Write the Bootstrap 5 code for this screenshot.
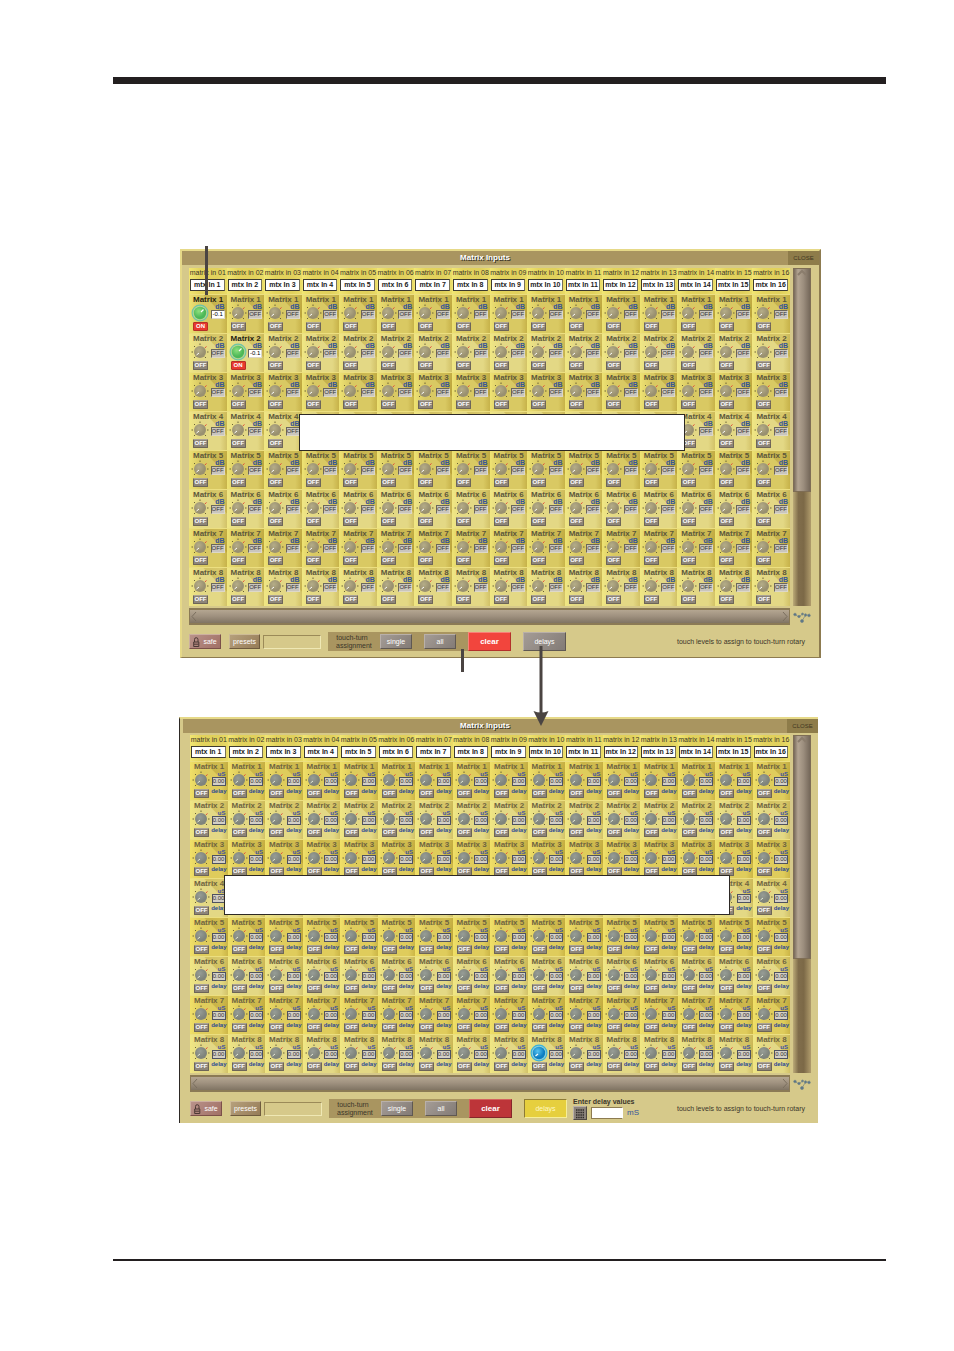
<!DOCTYPE html>
<html lang="en">
<head>
<meta charset="utf-8">
<meta name="viewport" content="width=device-width, initial-scale=1">
<title>Matrix Inputs</title>
<link href="https://cdn.jsdelivr.net/npm/bootstrap@5.3.0/dist/css/bootstrap.min.css" rel="stylesheet">
<style>
body{font-family:"Liberation Sans",Arial,sans-serif;font-size:7px;line-height:8px;color:#3b352a;background:#fff}
.sheet{padding:77px 68px 0 113px}
.rule-top{height:7px;background:#231f20}
.rule-bottom{height:2px;background:#231f20;margin-top:136px}
button{font-family:inherit;padding:0;line-height:8px}
.panel{background:#d6c98a}
.panel-levels{margin:165px 65px 0 67px;border:solid;border-width:2px 2px 1px 2px;border-color:#e6d988 #8d7b50 #8d7b50 #e6d988}
.panel-delays{margin:59px 68px 0 66px;border-left:1px solid #2d2925;border-top:2px solid #e6d988;padding-left:3px}
.titlebar{height:14px;background:#a99560}
.titlebar h2{font-size:8px;line-height:14px;font-weight:700;color:#fff;text-shadow:1px 1px 0 #3b352a}
.close-btn{width:31px;height:14px;border:0;background:#8e7c4a;color:#40371f;font-size:6px}
.work{display:grid;grid-template-columns:1fr 18px;column-gap:3px;row-gap:2px}
.panel-levels .work{padding:3px 8px 0 7px}
.panel-delays .work{padding:2px 7px 0 7px}
.strips{display:grid;grid-template-columns:repeat(16,minmax(0,1fr))}
.head-cell{height:26px;text-align:center;background:linear-gradient(90deg,#f1e673,#e3d35c 30%,#e0d05c 75%,#eadc68);white-space:nowrap}
.head-cell span{display:block;height:11px;line-height:10px;margin:0 -2px}
.name-btn{display:block;width:calc(100% - 3px);height:12px;margin:0 1px;border:1px solid #3d3a30;border-right-color:#77725c;background:#fff;font-size:7px;font-weight:700;color:#222;line-height:10px;overflow:hidden}
.cell-box{display:grid;grid-template-columns:19px minmax(0,1fr);grid-template-rows:10px 17px 11px;height:39px;padding:0 2px;border-top:1px solid #ecdf80;
background:linear-gradient(90deg,rgba(245,235,120,.75),rgba(245,235,120,0) 30%,rgba(150,120,20,0) 82%,rgba(160,130,20,.32)),linear-gradient(45deg,#d9c963 68%,#c5b14c 70%,#d2c05a)}
.cell-box.even{background:linear-gradient(90deg,rgba(245,236,130,.75),rgba(245,236,130,0) 30%,rgba(150,120,20,0) 82%,rgba(160,130,20,.26)),linear-gradient(45deg,#e3d885 68%,#d2c161 70%,#dccd72)}
.cell-title{grid-column:1/3;font-size:8px;line-height:10px;font-weight:700;color:#5c573a;white-space:nowrap;padding-left:2px}
.cell-box.live .cell-title{color:#1f1c10}
.knob-btn{border:0;background:none;width:18px;height:18px;margin-top:-1px}
.knob-btn svg{display:block;width:18px;height:18px}
.readout{display:flex;flex-direction:column;align-items:flex-end;margin-top:-1px}
.unit-text{color:#34549a;font-weight:700;font-size:7px;line-height:6px}
.value-box{width:14px;height:9px;border:1px solid #6b675c;border-right-color:#ddd8c8;border-bottom-color:#ddd8c8;background:#c9c5bd;font-size:6px;line-height:7px;display:flex;justify-content:center;color:#333;white-space:nowrap}
.live .value-box{background:#fff;color:#000}
.off-btn{width:15px;height:9px;margin-left:2px;border:1px solid #6d6558;border-top-color:#aaa295;border-radius:1px;background:#8d8579;color:#fff;font-size:6px;line-height:7px;font-weight:700}
.live .off-btn{background:#e8392e;border-color:#b53027}
.delay-text{font-weight:700;font-size:6px;color:#2c4a95;line-height:6px;margin:-1px -1px 0 0;display:flex;justify-content:flex-end}
.panel-delays .cell-box:not(.even){background:linear-gradient(90deg,rgba(250,235,110,.65),rgba(250,235,110,0) 30%,rgba(150,120,20,0) 82%,rgba(160,130,20,.3)),linear-gradient(45deg,#dfcc5c 68%,#c9b448 70%,#d6c256)}
.panel-delays .cell-title{color:#6f6440}
.panel-delays .unit-text{font-size:6px;color:#3b4fa5}
.panel-delays .value-box{border-color:#4e5260;background:#d3cfc6}
.vtrack{height:338px;background:linear-gradient(90deg,#bcab78,#806d4b 30%,#7c6947 60%,#b09c6c)}
.vthumb{height:224px;border:1px solid #7e6d55;background:linear-gradient(90deg,#786a5b,#b3a492 25%,#9b8d7d 60%,#75685a)}
.vthumb svg,.htrack svg{display:block}
.htrack{height:17px;border:solid #8b7a55;border-width:2px 1px;background:linear-gradient(#b4a691,#a09280 45%,#807463)}
.panel-levels .tools{margin-top:7px;padding:0 14px 6px 7px}
.panel-delays .tools{margin-top:5px;padding:0 13px 3px 7px}
.key{height:15px;width:32px;border:1px solid;border-color:#b9b0a9 #5f5852 #5f5852 #b9b0a9;background:linear-gradient(135deg,#a49c96,#837b76);color:#fff;font-size:7px;display:flex;align-items:center;justify-content:center}
.key-safe{background:linear-gradient(135deg,#b9928a,#a17066);border-color:#cdb0a0 #7b5049 #7b5049 #cdb0a0;gap:3px}
.key-presets{width:31px;background:linear-gradient(135deg,#b6a07c,#967c58);border-color:#cdbb96 #6f5b3e #6f5b3e #cdbb96}
.key-big{width:43px;height:19px}
.key-clear{background:#f2453d;border-color:#f98178 #b3312b #b3312b #f98178;font-weight:700;font-size:8px}
.key-delays{margin-left:12px}
.panel-delays .key-clear{background:#bd3539;border-color:#d3625e #85262a #85262a #d3625e}
.panel-delays .key-delays{background:#e6cf3e;border-color:#8d7b35 #f6ee9a #f6ee9a #8d7b35;color:#fff8c4}
.preset-field{width:58px;height:14px;margin-left:3px;border:1px solid;border-color:#9b8a58 #efe8b4 #efe8b4 #9b8a58;background:#d6c98a;border-radius:0;padding:0 2px;font-size:7px}
.assign{background:#a99560;height:19px;gap:12px;margin-left:7px}
.assign-text{width:40px;text-align:center;white-space:nowrap;padding-left:8px}
.hint{color:#3b352a;white-space:nowrap}
.delay-entry{margin-left:6px;white-space:nowrap}
.delay-entry label{font-weight:700;line-height:9px;display:block}
.calc-btn{width:14px;height:14px;border:1px solid;border-color:#b9b0a9 #4f4842 #4f4842 #b9b0a9;background:#8a827b}
.calc-btn svg{display:block}
.ms-field{width:32px;height:12px;border:1px solid #8d7b50;border-right-color:#fff;background:#fff;padding:0 2px;font-size:7px}
.ms-unit{font-size:8px;color:#34549a}
.cover{position:absolute;background:#fff;border:1px solid #2d2925}
.cover-levels{left:117px;right:134px;top:163px;height:37px}
.cover-delays{left:44px;right:88px;top:156px;height:40px}
.pointer{position:absolute;width:3px;background:#4a4442}
.pointer-cell{left:23px;top:-5px;height:49px}
.pointer-assign{left:279px;top:398px;height:23px}
.arrow{position:absolute;left:351px;top:395px;z-index:2}
</style>
</head>
<body>
<svg width="0" height="0" class="position-absolute" aria-hidden="true">
<defs>
<radialGradient id="gGrey" cx=".4" cy=".35"><stop offset="0" stop-color="#b5ad88"/><stop offset="1" stop-color="#999070"/></radialGradient>
<radialGradient id="gSlate" cx=".4" cy=".35"><stop offset="0" stop-color="#979d96"/><stop offset="1" stop-color="#7f847c"/></radialGradient>
<radialGradient id="gGreen" cx=".4" cy=".35"><stop offset="0" stop-color="#8ee07c"/><stop offset="1" stop-color="#4cb858"/></radialGradient>
<radialGradient id="gBlue" cx=".4" cy=".35"><stop offset="0" stop-color="#58c4f0"/><stop offset="1" stop-color="#0d7ec2"/></radialGradient>
<g id="ticks" stroke="#6b6238" stroke-width="1"><path d="M9 .5V2M.5 9H2M16 9H17.500M3 3L4 4M3 15L4.200 13.800M15 15L13.800 13.800"/><path d="M15.500 3.500L13.800 5" stroke="#e04a3a"/></g>
<g id="kGrey"><use href="#ticks"/><circle cx="9" cy="9" r="6" fill="url(#gGrey)"/><path d="M5.500 12L8 10" stroke="#fff" stroke-width="1"/></g>
<g id="kSlate"><use href="#ticks"/><circle cx="9" cy="9" r="6" fill="url(#gSlate)"/><path d="M5.500 12L8 10" stroke="#e6ead8" stroke-width="1"/></g>
<g id="kGreen"><circle cx="9" cy="9" r="7.900" fill="#b7d592" stroke="#6cc4a8" stroke-width="1.200"/><circle cx="9" cy="9" r="6.200" fill="url(#gGreen)"/><path d="M10 8L12.500 5.500" stroke="#fff" stroke-width="1.200"/></g>
<g id="kBlue"><circle cx="9" cy="9" r="7.900" fill="#8fd0d8" stroke="#39b2dc" stroke-width="1.200"/><circle cx="9" cy="9" r="6.200" fill="url(#gBlue)"/><path d="M5.500 12L8 10" stroke="#fff" stroke-width="1.200"/></g>
<g id="lock" fill="none" stroke="#4b3834"><path d="M1.500 5V2.500Q1.500 .7 3.200 .7T5 2.500V5"/><path d="M.7 5H5.800V9.500H.7ZM1 7.200H5.500"/></g>
<g id="nodes" stroke="#7d8c84" stroke-width=".8" fill="#56728a"><path d="M1 2L6 5M6 5L9.500 2M9 9L12 4L17 2" fill="none"/><circle cx="2" cy="2.500" r="1.300"/><circle cx="6" cy="4.500" r="1.200"/><circle cx="9" cy="9" r="1.500"/><circle cx="9.500" cy="2" r="1"/><circle cx="12.500" cy="3" r="1.200"/><circle cx="16" cy="3.500" r="1.300"/></g>
</defs>
</svg>
<main class="sheet">
<div class="rule-top"></div>

<section class="panel panel-levels position-relative" data-kind="levels">
<header class="titlebar d-flex"><h2 class="m-0 flex-grow-1 text-center">Matrix Inputs</h2><button class="close-btn" type="button">CLOSE</button></header>
<div class="work">
<div class="strips"></div>
<div class="vtrack"><div class="vthumb"><svg width="16" height="8"><path d="M4 6L8 2L12 6" fill="none" stroke="#8b7d6d" stroke-width="2"/></svg></div></div>
<div class="htrack d-flex justify-content-between"><svg width="8" height="13"><path d="M6 2L2 6.500L6 11" fill="none" stroke="#7b6f5f"/></svg><svg width="8" height="13"><path d="M2 2L6 6.500L2 11" fill="none" stroke="#7b6f5f"/></svg></div>
<svg class="mt-1" width="18" height="12"><use href="#nodes"/></svg>
</div>
<footer class="tools d-flex align-items-center">
<button class="key key-safe" type="button"><svg width="7" height="10"><use href="#lock"/></svg>safe</button>
<button class="key key-presets ms-2" type="button">presets</button>
<input class="preset-field" type="text" aria-label="Preset name">
<div class="assign d-flex align-items-center"><div class="assign-text">touch-turn<br>assignment</div><button class="key" type="button">single</button><button class="key" type="button">all</button><button class="key key-big key-clear" type="button">clear</button></div>
<button class="key key-big key-delays" type="button">delays</button>
<span class="hint ms-auto">touch levels to assign to touch-turn rotary</span>
</footer>
<div class="cover cover-levels"></div>
<div class="pointer pointer-cell"></div>
<div class="pointer pointer-assign"></div>
<svg class="arrow" width="16" height="82"><path d="M8 0V68" stroke="#4a4442" stroke-width="3"/><path d="M.5 65Q8 68 15.500 65L8 80Z" fill="#4a4442"/></svg>
</section>

<section class="panel panel-delays position-relative" data-kind="delays">
<header class="titlebar d-flex"><h2 class="m-0 flex-grow-1 text-center">Matrix Inputs</h2><button class="close-btn" type="button">CLOSE</button></header>
<div class="work">
<div class="strips"></div>
<div class="vtrack"><div class="vthumb"><svg width="16" height="8"><path d="M4 6L8 2L12 6" fill="none" stroke="#8b7d6d" stroke-width="2"/></svg></div></div>
<div class="htrack d-flex justify-content-between"><svg width="8" height="13"><path d="M6 2L2 6.500L6 11" fill="none" stroke="#7b6f5f"/></svg><svg width="8" height="13"><path d="M2 2L6 6.500L2 11" fill="none" stroke="#7b6f5f"/></svg></div>
<svg class="mt-1" width="18" height="12"><use href="#nodes"/></svg>
</div>
<footer class="tools d-flex align-items-center">
<button class="key key-safe" type="button"><svg width="7" height="10"><use href="#lock"/></svg>safe</button>
<button class="key key-presets ms-2" type="button">presets</button>
<input class="preset-field" type="text" aria-label="Preset name">
<div class="assign d-flex align-items-center"><div class="assign-text">touch-turn<br>assignment</div><button class="key" type="button">single</button><button class="key" type="button">all</button><button class="key key-big key-clear" type="button">clear</button></div>
<button class="key key-big key-delays" type="button">delays</button>
<div class="delay-entry"><label for="delayMs">Enter delay values</label><div class="d-flex align-items-center gap-1"><button class="calc-btn" type="button" aria-label="Keypad"><svg width="12" height="12"><path d="M2 3H10M2 5.500H10M2 8H10M2 10.500H10" stroke="#2f2b28" stroke-width="1.500" stroke-dasharray="1.500 .7"/></svg></button><input id="delayMs" class="ms-field" type="text"><span class="ms-unit">mS</span></div></div>
<span class="hint ms-auto">touch levels to assign to touch-turn rotary</span>
</footer>
<div class="cover cover-delays"></div>
</section>

<div class="rule-bottom"></div>
</main>
<script src="https://cdn.jsdelivr.net/npm/bootstrap@5.3.0/dist/js/bootstrap.bundle.min.js"></script>
<script>
document.querySelectorAll('.panel').forEach(panel => {
  const delays = panel.dataset.kind === 'delays';
  let html = '';
  for (let c = 1; c <= 16; c++)
    html += `<div class="head-cell"><span>matrix in ${String(c).padStart(2, '0')}</span><button class="name-btn" type="button">mtx In ${c}</button></div>`;
  for (let r = 1; r <= 8; r++)
    for (let c = 1; c <= 16; c++) {
      const live = !delays && r === c && r <= 2;
      const knob = delays ? (r === 8 && c === 10 ? 'kBlue' : 'kSlate') : (live ? 'kGreen' : 'kGrey');
      html += `<div class="cell-box ${r % 2 ? '' : 'even'} ${live ? 'live' : ''}"><div class="cell-title">Matrix ${r}</div>
<button class="knob-btn" type="button" aria-label="Matrix ${r} input ${c}"><svg viewBox="0 0 18 18"><use href="#${knob}"/></svg></button>
<div class="readout"><span class="unit-text">${delays ? 'uS' : 'dB'}</span><span class="value-box">${delays ? '0.00' : live ? '-0.1' : 'OFF'}</span></div>
<button class="off-btn" type="button">${live ? 'ON' : 'OFF'}</button>${delays ? '<span class="delay-text">delay</span>' : ''}</div>`;
    }
  panel.querySelector('.strips').innerHTML = html;
});
</script>
</body>
</html>
